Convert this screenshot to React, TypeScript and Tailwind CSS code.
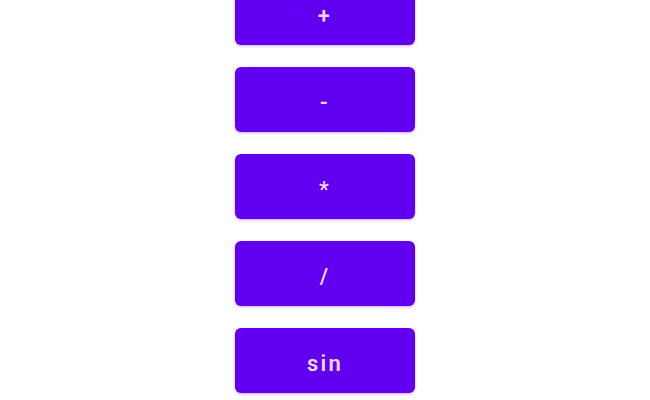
const ops = ['+', '-', '*', '/', 'sin'];

export default function App() {
  return (
    <div className="h-[400px] w-[650px] overflow-hidden bg-white">
      <div className="mt-[-20px] flex flex-col items-center gap-[22px]">
        {ops.map((op) => (
          <button
            key={op}
            className="flex h-[65px] w-[180px] items-center justify-center rounded-[6px] bg-[#6000ee] pt-[5px] text-[22px] font-semibold tracking-[0.1em] text-[#f0d4ff] shadow-[0_1px_3px_rgba(98,0,238,0.35)]"
            style={{ fontFamily: 'Roboto, "Noto Sans", sans-serif' }}
          >
            {op}
          </button>
        ))}
      </div>
    </div>
  );
}
